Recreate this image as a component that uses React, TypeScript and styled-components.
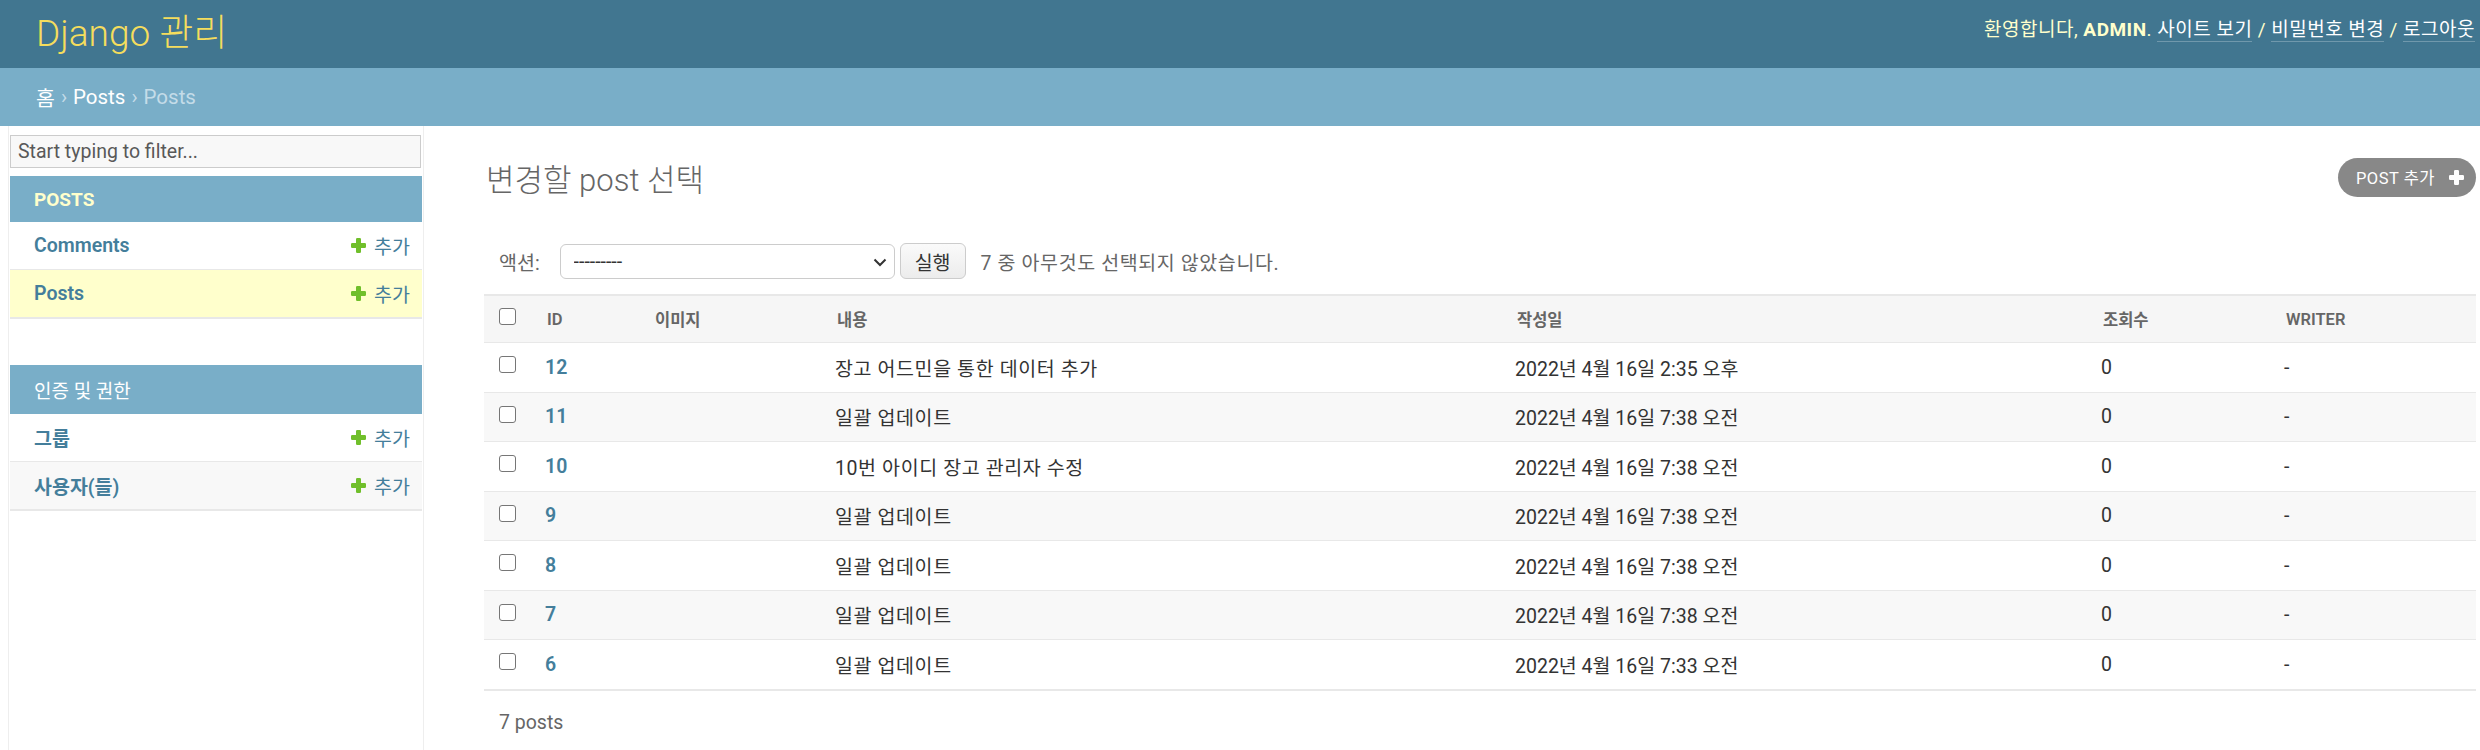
import React from 'react';
import styled, { createGlobalStyle } from 'styled-components';

const GlobalStyle = createGlobalStyle`
  html, body { margin: 0; padding: 0; background: #fff; }
  body {
    width: 2480px;
    font-family: Roboto, "Noto Sans CJK KR", "Noto Sans", sans-serif;
    color: #333;
  }
  * { box-sizing: border-box; }
`;

const Header = styled.header`
  height: 68px;
  background: #417690;
  display: flex;
  align-items: center;
  justify-content: space-between;
  padding: 0 5px 0 36px;
`;

const Branding = styled.h1`
  margin: 0;
  font-size: 37px;
  font-weight: 300;
  line-height: 40px;
  color: #f5dd5d;
`;

const UserTools = styled.div`
  align-self: flex-start;
  margin-top: 18px;
  font-size: 19px;
  line-height: 24px;
  letter-spacing: 0.5px;
  color: #ffc;
  strong {
    font-weight: 700;
    text-transform: uppercase;
  }
`;

const ToolLink = styled.a`
  color: #fff;
  text-decoration: none;
  border-bottom: 1px solid rgba(255, 255, 255, 0.25);
`;

const Breadcrumbs = styled.nav`
  height: 58px;
  background: #79aec8;
  display: flex;
  align-items: center;
  padding-left: 36px;
  font-size: 20.5px;
  color: #c4dce8;
  gap: 6px;
`;

const Crumb = styled.a`
  color: #fff;
  text-decoration: none;
`;

const Main = styled.div`
  display: flex;
  min-height: 624px;
`;

const Sidebar = styled.aside`
  flex: 0 0 416px;
  margin-left: 8px;
  border-left: 1px solid #eee;
  border-right: 1px solid #eee;
  padding: 9px 1px 0;
`;

const FilterInput = styled.input`
  display: block;
  width: 411px;
  height: 33px;
  margin: 0;
  padding: 0 7px;
  background: #f8f8f8;
  border: 1px solid #ccc;
  font-family: inherit;
  font-size: 19.5px;
  color: #333;
  &::placeholder { color: #595959; opacity: 1; }
`;

const Module = styled.section<{ $gap: number }>`
  margin-top: ${p => p.$gap}px;
`;

const Caption = styled.h2<{ $current?: boolean; $h: number }>`
  margin: 0;
  height: ${p => p.$h}px;
  background: #79aec8;
  display: flex;
  align-items: center;
  padding-left: 24px;
  font-size: 19px;
  text-transform: uppercase;
  color: ${p => (p.$current ? '#ffc' : '#fff')};
  font-weight: ${p => (p.$current ? 700 : 400)};
`;

const ModelRow = styled.div<{ $current?: boolean }>`
  height: 48px;
  display: flex;
  align-items: center;
  justify-content: space-between;
  padding: 0 12px 0 24px;
  border-bottom: 1px solid #e8e8e8;
  background: ${p => (p.$current ? '#ffc' : '#fff')};
  &:nth-of-type(even) {
    background: ${p => (p.$current ? '#ffc' : '#f8f8f8')};
  }
  &:last-child {
    height: 49px;
    border-bottom-width: 2px;
  }
`;

const ModelLink = styled.a`
  color: #447e9b;
  font-weight: 600;
  font-size: 19.5px;
  text-decoration: none;
`;

const AddLink = styled.a`
  display: flex;
  align-items: center;
  gap: 8px;
  color: #447e9b;
  font-size: 19.5px;
  text-decoration: none;
`;

const Content = styled.main`
  flex: 1;
  padding: 21px 4px 0 60px;
`;

const TitleRow = styled.div`
  display: flex;
  align-items: center;
  justify-content: space-between;
  height: 60px;
`;

const Title = styled.h1`
  margin: 0 0 0 2px;
  font-size: 31px;
  font-weight: 300;
  color: #666;
`;

const AddButton = styled.a`
  display: flex;
  align-items: center;
  gap: 14px;
  height: 39px;
  padding: 0 12px 0 18px;
  border-radius: 20px;
  background: #888;
  color: #fff;
  font-size: 16.5px;
  letter-spacing: 0.5px;
  text-transform: uppercase;
  text-decoration: none;
`;

const ActionsBar = styled.div`
  margin-top: 36px;
  height: 36px;
  display: flex;
  align-items: center;
  padding-left: 15px;
  font-size: 19.5px;
  color: #666;
`;

const ActionLabel = styled.label`
  margin-right: 20px;
`;

const SelectWrap = styled.div`
  position: relative;
  width: 335px;
  height: 35px;
`;

const Select = styled.select`
  appearance: none;
  width: 100%;
  height: 100%;
  margin: 0;
  padding: 0 0 0 13px;
  border: 1px solid #ccc;
  border-radius: 6px;
  background: #fff;
  font-family: inherit;
  font-size: 19.5px;
  color: #333;
`;

const Chevron = styled.svg`
  position: absolute;
  right: 8px;
  top: 14px;
  pointer-events: none;
`;

const GoButton = styled.button`
  margin-left: 5px;
  width: 66px;
  height: 36px;
  border: 1px solid #ccc;
  border-radius: 6px;
  background: linear-gradient(#fafafa, #ececec);
  font-family: inherit;
  font-size: 19.5px;
  color: #333;
  padding: 0;
`;

const Counter = styled.span`
  margin-left: 15px;
  letter-spacing: 0.6px;
`;

const Results = styled.div`
  margin-top: 15px;
  width: 1992px;
`;

const cols = '49px 108px 182px 680px 586px 183px 204px';

const HeaderRow = styled.div`
  display: grid;
  grid-template-columns: ${cols};
  align-items: center;
  height: 49px;
  background: #f6f6f6;
  border-top: 2px solid #e8e8e8;
  border-bottom: 1px solid #e8e8e8;
`;

const HeadCell = styled.div`
  padding-left: 14px;
  font-size: 16.5px;
  font-weight: 600;
  color: #666;
  text-transform: uppercase;
  white-space: nowrap;
`;

const BodyRow = styled.div`
  display: grid;
  grid-template-columns: ${cols};
  align-items: center;
  height: 49.5px;
  border-bottom: 1px solid #e8e8e8;
  background: #fff;
  &:nth-child(even) { background: #f8f8f8; }
`;

const Cell = styled.div<{ $link?: boolean; $wide?: boolean }>`
  padding-left: 12px;
  font-size: 19.5px;
  white-space: nowrap;
  letter-spacing: ${p => (p.$wide ? '0.6px' : '0')};
  color: ${p => (p.$link ? '#447e9b' : '#333')};
  font-weight: ${p => (p.$link ? 600 : 400)};
`;

const CheckCell = styled.div`
  padding-left: 15px;
`;

const Check = styled.input`
  appearance: none;
  display: block;
  width: 17px;
  height: 17px;
  margin: -5px 0 0;
  border: 1.5px solid #767676;
  border-radius: 3px;
  background: #fff;
`;

const Paginator = styled.p`
  margin: 0;
  border-top: 1px solid #e8e8e8;
  padding: 15px 0 0 15px;
  line-height: 33px;
  font-size: 19.5px;
  color: #666;
`;

const PlusIcon = ({ color }: { color: string }) => (
  <svg width="15" height="15" viewBox="0 0 15 15" aria-hidden="true">
    <path
      d="M5 1.2A1.2 1.2 0 0 1 6.2 0h2.6A1.2 1.2 0 0 1 10 1.2V5h3.8A1.2 1.2 0 0 1 15 6.2v2.6A1.2 1.2 0 0 1 13.8 10H10v3.8A1.2 1.2 0 0 1 8.8 15H6.2A1.2 1.2 0 0 1 5 13.8V10H1.2A1.2 1.2 0 0 1 0 8.8V6.2A1.2 1.2 0 0 1 1.2 5H5z"
      fill={color}
    />
  </svg>
);

const rows = [
  { id: 12, text: '장고 어드민을 통한 데이터 추가', date: '2022년 4월 16일 2:35 오후' },
  { id: 11, text: '일괄 업데이트', date: '2022년 4월 16일 7:38 오전' },
  { id: 10, text: '10번 아이디 장고 관리자 수정', date: '2022년 4월 16일 7:38 오전' },
  { id: 9, text: '일괄 업데이트', date: '2022년 4월 16일 7:38 오전' },
  { id: 8, text: '일괄 업데이트', date: '2022년 4월 16일 7:38 오전' },
  { id: 7, text: '일괄 업데이트', date: '2022년 4월 16일 7:38 오전' },
  { id: 6, text: '일괄 업데이트', date: '2022년 4월 16일 7:33 오전' },
];

export default function App() {
  return (
    <>
      <GlobalStyle />
      <Header>
        <Branding>Django 관리</Branding>
        <UserTools>
          환영합니다, <strong>admin</strong>. <ToolLink href="#">사이트 보기</ToolLink> /{' '}
          <ToolLink href="#">비밀번호 변경</ToolLink> / <ToolLink href="#">로그아웃</ToolLink>
        </UserTools>
      </Header>
      <Breadcrumbs>
        <Crumb href="#">홈</Crumb>
        <span>›</span>
        <Crumb href="#">Posts</Crumb>
        <span>›</span>
        <span>Posts</span>
      </Breadcrumbs>
      <Main>
        <Sidebar>
          <FilterInput placeholder="Start typing to filter..." />
          <Module $gap={8}>
            <Caption $current $h={46}>Posts</Caption>
            <ModelRow>
              <ModelLink href="#">Comments</ModelLink>
              <AddLink href="#"><PlusIcon color="#70bf2b" />추가</AddLink>
            </ModelRow>
            <ModelRow $current>
              <ModelLink href="#">Posts</ModelLink>
              <AddLink href="#"><PlusIcon color="#70bf2b" />추가</AddLink>
            </ModelRow>
          </Module>
          <Module $gap={46}>
            <Caption $h={49}>인증 및 권한</Caption>
            <ModelRow>
              <ModelLink href="#">그룹</ModelLink>
              <AddLink href="#"><PlusIcon color="#70bf2b" />추가</AddLink>
            </ModelRow>
            <ModelRow>
              <ModelLink href="#">사용자(들)</ModelLink>
              <AddLink href="#"><PlusIcon color="#70bf2b" />추가</AddLink>
            </ModelRow>
          </Module>
        </Sidebar>
        <Content>
          <TitleRow>
            <Title>변경할 post 선택</Title>
            <AddButton href="#">post 추가<PlusIcon color="#fff" /></AddButton>
          </TitleRow>
          <ActionsBar>
            <ActionLabel>액션:</ActionLabel>
            <SelectWrap>
              <Select defaultValue="">
                <option value="">---------</option>
                <option value="delete">선택된 posts 을/를 삭제합니다.</option>
              </Select>
              <Chevron width="14" height="9" viewBox="0 0 14 9">
                <path d="M1.5 1.5l5.5 5.5 5.5-5.5" stroke="#333" strokeWidth="2" fill="none" />
              </Chevron>
            </SelectWrap>
            <GoButton>실행</GoButton>
            <Counter>7 중 아무것도 선택되지 않았습니다.</Counter>
          </ActionsBar>
          <Results>
            <HeaderRow>
              <CheckCell><Check type="checkbox" /></CheckCell>
              <HeadCell>ID</HeadCell>
              <HeadCell>이미지</HeadCell>
              <HeadCell>내용</HeadCell>
              <HeadCell>작성일</HeadCell>
              <HeadCell>조회수</HeadCell>
              <HeadCell>Writer</HeadCell>
            </HeaderRow>
            <div>
              {rows.map(r => (
                <BodyRow key={r.id}>
                  <CheckCell><Check type="checkbox" /></CheckCell>
                  <Cell $link>{r.id}</Cell>
                  <Cell></Cell>
                  <Cell $wide>{r.text}</Cell>
                  <Cell>{r.date}</Cell>
                  <Cell>0</Cell>
                  <Cell>-</Cell>
                </BodyRow>
              ))}
            </div>
            <Paginator>7 posts</Paginator>
          </Results>
        </Content>
      </Main>
    </>
  );
}
